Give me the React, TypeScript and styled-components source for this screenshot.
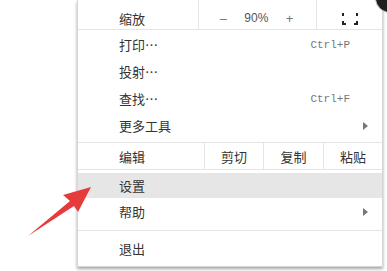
import React from "react";
import styled, { createGlobalStyle } from "styled-components";

const Global = createGlobalStyle`
  html, body { margin: 0; padding: 0; background: #fff; }
  body { width: 387px; height: 271px; overflow: hidden; position: relative;
    font-family: "Noto Sans CJK SC", "Noto Sans", sans-serif; }
`;

const Page = styled.div`
  position: relative;
  width: 387px;
  height: 271px;
  padding-left: 77px;
  box-sizing: border-box;
`;

const Menu = styled.div`
  width: 306px;
  box-sizing: border-box;
  background: #fff;
  border: 1px solid #d6d6d6;
  border-top: none;
  box-shadow: 0 2px 3px rgba(0, 0, 0, 0.35);
  color: #333;
  font-size: 13px;
`;

const Sep = styled.div`
  height: 1px;
  background: #e4e4e4;
`;

const Group = styled.div<{ $pt: number; $pb: number }>`
  padding: ${(p) => p.$pt}px 0 ${(p) => p.$pb}px;
`;

const Row = styled.div<{ $h: number; $active?: boolean }>`
  height: ${(p) => p.$h}px;
  display: flex;
  align-items: center;
  padding: 0 14px 0 41px;
  background: ${(p) => (p.$active ? "#e6e6e6" : "transparent")};
`;

const Label = styled.span`
  flex: 1;
  line-height: 1;
`;

const Shortcut = styled.span`
  font-family: "Liberation Mono", monospace;
  font-size: 11px;
  color: #777;
  margin-right: 18px;
`;

const Arrow = styled.span`
  width: 0;
  height: 0;
  border-top: 4px solid transparent;
  border-bottom: 4px solid transparent;
  border-left: 5px solid #777;
  margin-right: 0px;
`;

const SplitRow = styled.div<{ $h: number }>`
  height: ${(p) => p.$h}px;
  display: flex;
`;

const LabelCell = styled.div<{ $w: number; $pt?: number }>`
  width: ${(p) => p.$w}px;
  box-sizing: border-box;
  padding: ${(p) => p.$pt ?? 0}px 0 0 41px;
  display: flex;
  align-items: center;
  line-height: 1;
`;

const Cell = styled.div<{ $w: number; $pt?: number }>`
  width: ${(p) => p.$w}px;
  box-sizing: border-box;
  border-left: 1px solid #e4e4e4;
  padding-top: ${(p) => p.$pt ?? 0}px;
  display: flex;
  align-items: center;
  justify-content: center;
  line-height: 1;
`;

const ZoomCtl = styled.div`
  flex: 1;
  display: flex;
  align-items: center;
  justify-content: space-around;
  padding: 0 14px 0 12px;
  font-size: 12px;
  color: #666;
`;

const Sym = styled.span`
  font-family: "Liberation Sans", sans-serif;
  font-size: 13px;
  color: #777;
`;

const Pct = styled.span`
  font-family: "Liberation Sans", sans-serif;
  font-size: 12px;
  color: #555;
`;

const Avatar = styled.div`
  position: absolute;
  left: 376px;
  top: -16px;
  width: 28px;
  height: 28px;
  border-radius: 50%;
  background: #1e1e1e;
  box-shadow: 0 0 0 1px #bbb;
`;

const Pointer = styled.svg`
  position: absolute;
  left: 0;
  top: 0;
  pointer-events: none;
`;

function FullscreenIcon() {
  return (
    <svg width="16" height="13" viewBox="0 0 16 13">
      <g fill="none" stroke="#222" strokeWidth="2">
        <path d="M1 4V1" />
        <path d="M15 4V1" />
        <path d="M1 9v3h3" />
        <path d="M15 9v3h-3" />
      </g>
    </svg>
  );
}

export default function App() {
  return (
    <>
      <Global />
      <Page>
        <Menu>
          <SplitRow $h={29}>
            <LabelCell $w={120} $pt={7}>缩放</LabelCell>
            <Cell $w={118} $pt={7}>
              <ZoomCtl>
                <Sym>–</Sym>
                <Pct>90%</Pct>
                <Sym>+</Sym>
              </ZoomCtl>
            </Cell>
            <Cell $w={66} $pt={7}>
              <FullscreenIcon />
            </Cell>
          </SplitRow>
          <Sep />
          <Group $pt={1} $pb={3}>
            <Row $h={27}>
              <Label>打印…</Label>
              <Shortcut>Ctrl+P</Shortcut>
            </Row>
            <Row $h={27}>
              <Label>投射…</Label>
            </Row>
            <Row $h={27}>
              <Label>查找…</Label>
              <Shortcut>Ctrl+F</Shortcut>
            </Row>
            <Row $h={27}>
              <Label>更多工具</Label>
              <Arrow />
            </Row>
          </Group>
          <Sep />
          <SplitRow $h={26}>
            <LabelCell $w={126}>编辑</LabelCell>
            <Cell $w={59}>剪切</Cell>
            <Cell $w={60}>复制</Cell>
            <Cell $w={59}>粘贴</Cell>
          </SplitRow>
          <Sep />
          <Group $pt={3} $pb={5}>
            <Row $h={25} $active>
              <Label>设置</Label>
            </Row>
            <Row $h={27}>
              <Label>帮助</Label>
              <Arrow />
            </Row>
          </Group>
          <Sep />
          <Group $pt={4} $pb={4}>
            <Row $h={27}>
              <Label>退出</Label>
            </Row>
          </Group>
        </Menu>
        <Avatar />
        <Pointer width="387" height="271" viewBox="0 0 387 271">
          <polygon
            points="91,187 63,195 70,201 28,236 74,206 78,212"
            fill="#e63b3b"
          />
        </Pointer>
      </Page>
    </>
  );
}
